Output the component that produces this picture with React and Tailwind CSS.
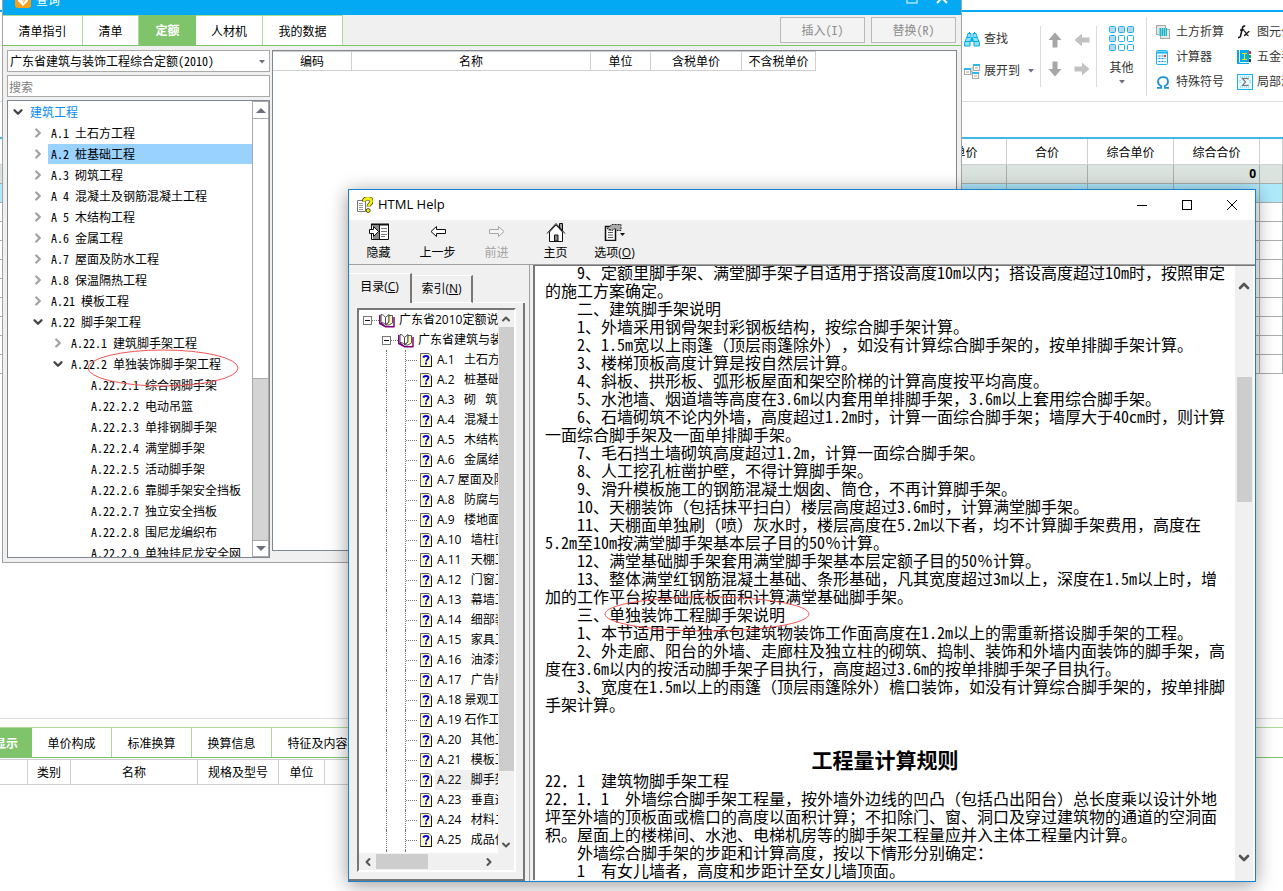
import React from 'react'
import { ChevronDown, ChevronRight, ChevronUp, ChevronLeft } from 'lucide-react'

const SONG = "font-['Noto_Sans_Mono_CJK_SC','Liberation_Mono','Noto_Sans_CJK_SC',monospace]"
const YAHEI = "font-['Open_Sans','Noto_Sans_CJK_SC',sans-serif]"

const quotaTree = [
  { level: 0, label: '建筑工程', state: 'open' },
  { level: 1, label: 'A.1 土石方工程', state: 'closed' },
  { level: 1, label: 'A.2 桩基础工程', state: 'closed', selected: true },
  { level: 1, label: 'A.3 砌筑工程', state: 'closed' },
  { level: 1, label: 'A 4 混凝土及钢筋混凝土工程', state: 'closed' },
  { level: 1, label: 'A 5 木结构工程', state: 'closed' },
  { level: 1, label: 'A.6 金属工程', state: 'closed' },
  { level: 1, label: 'A.7 屋面及防水工程', state: 'closed' },
  { level: 1, label: 'A.8 保温隔热工程', state: 'closed' },
  { level: 1, label: 'A.21 模板工程', state: 'closed' },
  { level: 1, label: 'A.22 脚手架工程', state: 'open' },
  { level: 2, label: 'A.22.1 建筑脚手架工程', state: 'closed' },
  { level: 2, label: 'A.22.2 单独装饰脚手架工程', state: 'open' },
  { level: 3, label: 'A.22.2.1 综合钢脚手架' },
  { level: 3, label: 'A.22.2.2 电动吊篮' },
  { level: 3, label: 'A.22.2.3 单排钢脚手架' },
  { level: 3, label: 'A.22.2.4 满堂脚手架' },
  { level: 3, label: 'A.22.2.5 活动脚手架' },
  { level: 3, label: 'A.22.2.6 靠脚手架安全挡板' },
  { level: 3, label: 'A.22.2.7 独立安全挡板' },
  { level: 3, label: 'A.22.2.8 围尼龙编织布' },
  { level: 3, label: 'A.22.2.9 单独挂尼龙安全网' },
]

const helpTopics = [
  'A.1   土石方工程',
  'A.2   桩基础工程',
  'A.3   砌   筑工程',
  'A.4   混凝土工程',
  'A.5   木结构工程',
  'A.6   金属结构工程',
  'A.7 屋面及防水工程',
  'A.8   防腐与保温',
  'A.9   楼地面工程',
  'A.10   墙柱面工程',
  'A.11   天棚工程',
  'A.12   门窗工程',
  'A.13   幕墙工程',
  'A.14   细部装饰',
  'A.15   家具工程',
  'A.16   油漆涂料',
  'A.17   广告牌',
  'A.18 景观工程',
  'A.19 石作工程',
  'A.20   其他工程',
  'A.21   模板工程',
  'A.22   脚手架工程',
  'A.23   垂直运输',
  'A.24   材料二次运输',
  'A.25   成品保护',
  'A.26',
]

const articleLines = [
  '　　9、定额里脚手架、满堂脚手架子目适用于搭设高度10m以内；搭设高度超过10m时，按照审定',
  '的施工方案确定。',
  '　　二、建筑脚手架说明',
  '　　1、外墙采用钢骨架封彩钢板结构，按综合脚手架计算。',
  '　　2、1.5m宽以上雨篷（顶层雨篷除外），如没有计算综合脚手架的，按单排脚手架计算。',
  '　　3、楼梯顶板高度计算是按自然层计算。',
  '　　4、斜板、拱形板、弧形板屋面和架空阶梯的计算高度按平均高度。',
  '　　5、水池墙、烟道墙等高度在3.6m以内套用单排脚手架，3.6m以上套用综合脚手架。',
  '　　6、石墙砌筑不论内外墙，高度超过1.2m时，计算一面综合脚手架；墙厚大于40cm时，则计算',
  '一面综合脚手架及一面单排脚手架。',
  '　　7、毛石挡土墙砌筑高度超过1.2m，计算一面综合脚手架。',
  '　　8、人工挖孔桩凿护壁，不得计算脚手架。',
  '　　9、滑升模板施工的钢筋混凝土烟囱、筒仓，不再计算脚手架。',
  '　　10、天棚装饰（包括抹平扫白）楼层高度超过3.6m时，计算满堂脚手架。',
  '　　11、天棚面单独刷（喷）灰水时，楼层高度在5.2m以下者，均不计算脚手架费用，高度在',
  '5.2m至10m按满堂脚手架基本层子目的50％计算。',
  '　　12、满堂基础脚手架套用满堂脚手架基本层定额子目的50％计算。',
  '　　13、整体满堂红钢筋混凝土基础、条形基础，凡其宽度超过3m以上，深度在1.5m以上时，增',
  '加的工作平台按基础底板面积计算满堂基础脚手架。',
  '　　三、单独装饰工程脚手架说明',
  '　　1、本节适用于单独承包建筑物装饰工作面高度在1.2m以上的需重新搭设脚手架的工程。',
  '　　2、外走廊、阳台的外墙、走廊柱及独立柱的砌筑、捣制、装饰和外墙内面装饰的脚手架，高',
  '度在3.6m以内的按活动脚手架子目执行，高度超过3.6m的按单排脚手架子目执行。',
  '　　3、宽度在1.5m以上的雨篷（顶层雨篷除外）檐口装饰，如没有计算综合脚手架的，按单排脚',
  '手架计算。',
]

const ruleLines = [
  '22．1　建筑物脚手架工程',
  '22．1．1　外墙综合脚手架工程量，按外墙外边线的凹凸（包括凸出阳台）总长度乘以设计外地',
  '坪至外墙的顶板面或檐口的高度以面积计算；不扣除门、窗、洞口及穿过建筑物的通道的空洞面',
  '积。屋面上的楼梯间、水池、电梯机房等的脚手架工程量应并入主体工程量内计算。',
  '　　外墙综合脚手架的步距和计算高度，按以下情形分别确定：',
  '　　1　有女儿墙者，高度和步距计至女儿墙顶面。',
]

/* ---------- icons ---------- */

function Caret({ className = '' }) {
  return (
    <svg width="6" height="4" viewBox="0 0 6 4" className={className}>
      <path d="M0 0h6L3 3.5z" fill="#6b6f80" />
    </svg>
  )
}

function BinocularsIcon() {
  return (
    <svg width="16" height="15" viewBox="0 0 16 15">
      <path d="M4 1.500h3v3l.5 1v4H6V14H.6v-3.500L3 5z" fill="#8fe3fb" stroke="#00a9ea" />
      <path d="M12 1.500H9v3l-.5 1v4H10V14h5.400v-3.500L13 5z" fill="#8fe3fb" stroke="#00a9ea" />
      <path d="M5 .5h1M10 .5h1M3 5.500h3.500M9.500 5.500H13M6 8h4M1 9.500h5M10 9.500h5" stroke="#00a9ea" />
    </svg>
  )
}

function ExpandIcon() {
  return (
    <svg width="16" height="15" viewBox="0 0 16 15" fill="#fff" stroke="#a9a9a9">
      <path d="M6.500 7.500H8M8 3.500v8M8 3.500h2M8 11.500h1" fill="none" />
      <rect x=".5" y="4.500" width="6" height="6" />
      <rect x="9.500" y=".5" width="6" height="6" />
      <rect x="8.500" y="8.500" width="6" height="6" />
      <path d="M0 5h7M9 1h7M8 9h7" stroke="#2bb7f0" strokeWidth="2" />
      <path d="M2 8h3M11 4h3M10 12h3" stroke="#e2cdb8" strokeWidth="2" />
    </svg>
  )
}

function BlockArrow({ className = '', color = '#a6a6a6' }) {
  return (
    <svg width="16" height="16" viewBox="0 0 16 16" className={className}>
      <path d="M8 .5 14.500 8H10.500V15.500H5.500V8H1.500z" fill={color} />
    </svg>
  )
}

function GridIcon() {
  const cells = [0, 9, 18]
  return (
    <svg width="26" height="26" viewBox="0 0 26 26">
      {cells.map((y, r) =>
        cells.map((x, c) => (
          <rect
            key={`${x}-${y}`}
            x={x + 0.5}
            y={y + 0.5}
            width="6"
            height="6"
            rx="1"
            fill={r === 0 || c === 0 ? '#b5d8f1' : '#fff'}
            stroke="#1cb2f0"
          />
        )),
      )}
    </svg>
  )
}

function EarthworkIcon() {
  return (
    <svg width="15" height="15" viewBox="0 0 15 15">
      <rect x=".5" y=".5" width="9" height="9" fill="#e6e6e6" stroke="#a8a8a8" />
      <rect x="4.500" y="4.500" width="9" height="9" fill="#e6e6e6" stroke="#a8a8a8" />
      <rect x="3" y="3" width="8" height="8" fill="#1db4c4" />
      <path d="M3 4h8M3 6h8M3 8h8M3 10h8" stroke="#c9f2f7" strokeDasharray="1 1" />
    </svg>
  )
}

function CalculatorIcon() {
  return (
    <svg width="13" height="15" viewBox="0 0 13 15">
      <rect x=".5" y=".5" width="11" height="14" rx="1" fill="#eaf8fe" stroke="#1cb2f0" />
      <path d="M1 2.500h10" stroke="#1cb2f0" strokeWidth="2" />
      <path d="M2.500 6h5M2.500 8.500h7M2.500 11.500h7" stroke="#1a8fd0" strokeDasharray="2 1" />
      <path d="M8 6h2" stroke="#f0442c" strokeWidth="2" />
    </svg>
  )
}

function OmegaIcon() {
  return (
    <svg width="14" height="13" viewBox="0 0 14 13">
      <path
        d="M1 11.800h4.200V10C3 9 2 7.500 2 5.500 2 2.800 4 1.200 7 1.200s5 1.600 5 4.300c0 2-1 3.500-3.200 4.500v1.800H13"
        fill="none"
        stroke="#1e90d8"
        strokeWidth="1.800"
      />
    </svg>
  )
}

function FunctionIcon() {
  return (
    <svg width="14" height="14" viewBox="0 0 14 14" fill="none" stroke="#111">
      <path d="M1 12.500c2 .5 2.500-1 3-3.500L5.500 3C6 1 7 .8 8.200 1.300M3 5h4.500" strokeWidth="1.500" />
      <path d="M7 6.500c2-.8 2 4.500 4.500 4M12.500 6.300c-2 0-3 4.200-5.500 4.200" strokeWidth="1.300" />
    </svg>
  )
}

function HardwareIcon() {
  return (
    <svg width="14" height="14" viewBox="0 0 14 14">
      <rect x="0" y="0" width="12" height="14" fill="#00a9ea" />
      <path d="M2.500 0v12M2.500 12.500H12" stroke="#fff" />
      <path d="M5 3.500h5M7.500 3.500v6M5 9.500h5" stroke="#ffe100" />
      <path d="M13 1v3" stroke="#f22" strokeWidth="2" />
      <path d="M13 5v3" stroke="#2a2" strokeWidth="2" />
      <path d="M13 9v3" stroke="#333" strokeWidth="2" />
    </svg>
  )
}

function SigmaIcon() {
  return (
    <svg width="16" height="16" viewBox="0 0 16 16">
      <rect x=".5" y=".5" width="15" height="15" fill="#e6f8fe" stroke="#1cb2f0" />
      <path d="M3 3h10M3 13h10M3 6v4M13 6v4" stroke="#53c9f2" strokeDasharray="1 1" />
      <path d="M11 5.500V4.500H5.500L8.500 8l-3 3.500H11v-1" fill="none" stroke="#777" strokeWidth="1.200" />
    </svg>
  )
}

function HelpAppIcon() {
  return (
    <svg width="16" height="16" viewBox="0 0 16 16">
      <path d="M.5 3.500h8v11h-8z" fill="#fff" stroke="#777" />
      <path d="M2 6.500h4M2 8.500h4M2 10.500h4M2 12.500h4" stroke="#999" />
      <path d="M7 4.500C7 2 8.500 1.500 10.800 1.500s3.700 1 3.700 3c0 2.500-3 2.500-3 5" fill="none" stroke="#222" strokeWidth="4" />
      <path d="M7 4.500C7 2 8.500 1.500 10.800 1.500s3.700 1 3.700 3c0 2.500-3 2.500-3 5" fill="none" stroke="#f4ee00" strokeWidth="2.800" />
      <circle cx="11.200" cy="13.500" r="2" fill="#f4ee00" stroke="#222" strokeWidth=".8" />
    </svg>
  )
}

function HideIcon() {
  return (
    <svg width="20" height="18" viewBox="0 0 20 18">
      <path d="M2.500 1.500h17v15h-17z" fill="#fff" stroke="#111" />
      <path d="M2 1.500h18" stroke="#111" strokeWidth="2" />
      <rect x="4" y="3" width="6" height="13" fill="#8a8a8a" />
      <path d="M10.500 2v15" stroke="#111" />
      <path d="M12 5.500h6M12 8.500h6M12 11.500h6M12 13.500h4" stroke="#777" />
      <path d="M.5 6.500h4v-3L9.500 8.500l-5 5v-3h-4z" fill="#fff" stroke="#111" />
    </svg>
  )
}

function BackIcon() {
  return (
    <svg width="16" height="16" viewBox="0 0 16 16">
      <path d="M6.500 2.500v3h9v4h-9v3L1 7.500z" fill="#fff" stroke="#111" />
    </svg>
  )
}

function ForwardIcon() {
  return (
    <svg width="16" height="16" viewBox="0 0 16 16">
      <path d="M9.500 2.500v3h-9v4h9v3L15 7.500z" fill="#f4f4f4" stroke="#a6a6a6" />
    </svg>
  )
}

function HomeIcon() {
  return (
    <svg width="20" height="20" viewBox="0 0 20 20">
      <path d="M13.500 1.500h3v7h-3z" fill="#999" stroke="#111" />
      <path d="M3.500 10v9.500h13V10L10 3z" fill="#fff" stroke="#111" />
      <path d="M1 11.500 10 1.500l9 10" fill="none" stroke="#111" />
      <path d="M8.500 19v-6h3.500v6z" fill="#888" stroke="#111" />
    </svg>
  )
}

function OptionsIcon() {
  return (
    <svg width="21" height="18" viewBox="0 0 21 18">
      <path d="M1.500 3.500h10v14h-10z" fill="#fff" stroke="#111" strokeWidth="1.500" />
      <path d="M4 7h5M4 9.500h5M4 12h5M4 14.500h5" stroke="#555" />
      <path d="M3 5.500 8 1.500h9v6h-4l-2-2-3 2z" fill="#aaa" stroke="#222" strokeDasharray="2 1" />
      <path d="M16 10h5l-2.500 3z" fill="#111" />
    </svg>
  )
}

function BookIcon() {
  return (
    <svg width="16" height="15" viewBox="0 0 16 15" className="shrink-0">
      <path d="M0 2h1.500v8H3l4 3h8.500v1.500H6.500L0 11z" fill="#800080" />
      <path d="M2 1.500C4 1.500 5 2.500 6.500 4.500v7C5 10 4 9.500 2 9.500z" fill="#fff" stroke="#444" />
      <path d="M6.500 4.500 10 1.500V9L6.500 11.500z" fill="#fff" stroke="#444" />
      <path d="M10 2.500h3.500V10L10 12H7l3-3z" fill="#fffbb0" stroke="#555" />
      <path d="M15 4v9.500" stroke="#800080" strokeWidth="1.500" />
    </svg>
  )
}

function TopicIcon() {
  return (
    <svg width="12" height="14" viewBox="0 0 12 14" className="shrink-0">
      <path d="M.5.500h8.500l2.500 2.500v10.500h-11z" fill="#fffcc8" stroke="#666" />
      <path d="M11.500 3v10.500H.5" fill="none" stroke="#111" />
      <path d="M3.500 4.800C3.500 3.300 4.500 3 6 3s2.500.6 2.500 1.800C8.500 6.300 6.200 6.500 6.200 8.500" fill="none" stroke="#0000e0" strokeWidth="1.800" />
      <rect x="5" y="9.500" width="2" height="2" fill="#0000e0" />
    </svg>
  )
}

function MinusBox() {
  return (
    <svg width="9" height="9" viewBox="0 0 9 9" className="shrink-0">
      <rect x=".5" y=".5" width="8" height="8" fill="#fff" stroke="#777" />
      <path d="M2 4.500h5" stroke="#111" />
    </svg>
  )
}

/* ---------- main application ---------- */

function RibbonItem({ icon, label, caret }) {
  return (
    <button type="button" className="flex h-6 items-center whitespace-nowrap">
      <span className="flex w-5 items-center">{icon}</span>
      {label}
      {caret && <Caret className="ml-2" />}
    </button>
  )
}

function Ribbon() {
  return (
    <div className={`flex h-[90px] border-b border-[#dcdcdc] pl-[964px] text-[12px] text-[#333] ${YAHEI}`}>
      <div className="flex w-[76px] shrink-0 flex-col gap-2 pt-[15px]">
        <RibbonItem icon={<BinocularsIcon />} label="查找" />
        <RibbonItem icon={<ExpandIcon />} label="展开到" caret />
      </div>
      <div className="mt-[14px] grid h-[61px] w-[57px] shrink-0 grid-cols-2 place-items-center gap-x-2 border-x border-[#dcdcdc] px-[5px] pb-1">
        <button type="button" aria-label="上移"><BlockArrow /></button>
        <button type="button" aria-label="升级"><BlockArrow className="-rotate-90" color="#c2c2c2" /></button>
        <button type="button" aria-label="下移"><BlockArrow className="rotate-180" /></button>
        <button type="button" aria-label="降级"><BlockArrow className="rotate-90" color="#c2c2c2" /></button>
      </div>
      <button type="button" className="flex w-[49px] shrink-0 flex-col items-center pt-[14px]">
        <GridIcon />
        <span className="mt-[6px] leading-5">其他</span>
        <Caret className="mt-[2px]" />
      </button>
      <div className="mt-[5px] flex h-[79px] shrink-0 flex-col gap-px border-l border-[#dcdcdc] pt-[3px] pl-[9px]">
        <RibbonItem icon={<EarthworkIcon />} label="土方折算" />
        <RibbonItem icon={<CalculatorIcon />} label="计算器" />
        <RibbonItem icon={<OmegaIcon />} label="特殊符号" />
      </div>
      <div className="mt-[5px] flex shrink-0 flex-col gap-px pt-[3px] pl-[13px]">
        <RibbonItem icon={<FunctionIcon />} label="图元公式" />
        <RibbonItem icon={<HardwareIcon />} label="五金手册" />
        <RibbonItem icon={<SigmaIcon />} label="局部汇总" />
      </div>
    </div>
  )
}

function BudgetTable() {
  const cell = 'h-[19px] border-r border-b border-[#a9adab] p-0'
  const head = 'h-[26px] border-r border-b border-[#cfcfcf] p-0 font-normal'
  return (
    <table className={`w-full table-fixed border-separate border-spacing-0 text-[12px] ${SONG}`}>
      <colgroup>
        <col />
        <col className="w-[82px]" />
        <col className="w-[81px]" />
        <col className="w-[86px]" />
        <col className="w-[86px]" />
        <col className="w-[23px]" />
      </colgroup>
      <thead>
        <tr>
          {['', '单价', '合价', '综合单价', '综合合价', ''].map((name, idx) => (
            <th key={idx} className={head}>{name}</th>
          ))}
        </tr>
      </thead>
      <tbody>
        <tr className="bg-[#dae3de]">
          <td className={cell} />
          <td className={cell} />
          <td className={cell} />
          <td className={cell} />
          <td className={`${cell} pr-[3px] text-right font-['Open_Sans',sans-serif] leading-[18px] font-bold`}>0</td>
          <td className={cell} />
        </tr>
        {Array.from({ length: 10 }, (_, row) => (
          <tr key={row} className={row === 0 ? 'bg-[#ade8fb]' : ''}>
            {Array.from({ length: 6 }, (_, col) => (
              <td key={col} className={cell} />
            ))}
          </tr>
        ))}
      </tbody>
    </table>
  )
}

function DetailPanel() {
  const tab = 'w-20 shrink-0 border-r border-[#a9dd97] pt-px'
  return (
    <div className={`mt-auto h-[173px] border-t border-[#dcdcdc] pt-2 text-[12px] ${SONG}`}>
      <div className="flex h-[31px] border-t border-b border-t-[#a9dd97] border-b-[#7fc46b] whitespace-nowrap">
        <button type="button" className="flex w-8 shrink-0 items-center justify-end bg-[#7fc46b] pr-[14px] font-bold text-white">显示</button>
        <button type="button" className={tab}>单价构成</button>
        <button type="button" className={tab}>标准换算</button>
        <button type="button" className={tab}>换算信息</button>
        <button type="button" className="w-[92px] shrink-0 border-r border-[#a9dd97] pt-px">特征及内容</button>
      </div>
      <table className="mt-px w-[700px] table-fixed border-separate border-spacing-0 border-t border-[#cfcfcf]">
        <colgroup>
          <col className="w-[28px]" />
          <col className="w-[43px]" />
          <col className="w-[127px]" />
          <col className="w-[81px]" />
          <col className="w-[46px]" />
          <col />
        </colgroup>
        <thead>
          <tr>
            {['', '类别', '名称', '规格及型号', '单位', ''].map((name, idx) => (
              <th key={idx} className="h-[25px] border-r border-b border-[#cfcfcf] p-0 font-normal">{name}</th>
            ))}
          </tr>
        </thead>
      </table>
    </div>
  )
}

/* ---------- query window ---------- */

function QuotaTreeRow({ item }) {
  const chevronPad = ['pl-[3px]', 'pl-[23px]', 'pl-[43px]', 'pl-[63px]'][item.level]
  return (
    <li className={`flex h-[21px] ${chevronPad}`}>
      <button type="button" aria-label="展开" className="flex w-[14px] shrink-0 items-center justify-center">
        {item.state === 'open' && <ChevronDown size={14} strokeWidth={4} color="#444" />}
        {item.state === 'closed' && <ChevronRight size={14} strokeWidth={4} color="#a3a3a3" />}
      </button>
      <span
        className={`flex grow items-center whitespace-pre ${item.level === 0 ? 'pl-[5px] text-[#0a8cf5]' : 'ml-[3px] pl-[3px]'} ${
          item.selected ? 'mt-px bg-[#99d1ff]' : ''
        }`}
      >
        {item.label}
      </span>
    </li>
  )
}

function QueryWindow() {
  const tab = 'shrink-0 border-t border-r border-[#a9dd97] bg-white pt-px'
  const action = 'h-[26px] w-[85px] border border-[#b9b9b9] bg-[#f3f3f3] text-[#8c8c8c]'
  const field = 'h-[22px] w-full border border-[#a9a9a9] bg-white'
  return (
    <section className={`absolute -top-[15px] left-[2px] w-[960px] border-x border-b border-[#a3a3a3] bg-[#f0f0f0] text-[12px] ${SONG}`}>
      <header className="flex h-[30px] items-center bg-[#03a9f2] pr-[13px] pl-3 text-white">
        <svg width="16" height="16" viewBox="0 0 16 16">
          <rect width="16" height="16" rx="3" fill="#f9a11b" />
          <path d="M3 4l5 5 5-5v5l-5 5-5-5z" fill="#fff" />
          <path d="M8 11l3-4" stroke="#f9a11b" />
        </svg>
        <h1 className="grow pl-[5px] text-[12px]">查询</h1>
        <button type="button" aria-label="最大化" className="mr-[18px] mb-1">
          <svg width="12" height="12" viewBox="0 0 12 12"><rect x="1" y="1" width="10" height="10" fill="none" stroke="#fff" /></svg>
        </button>
        <button type="button" aria-label="关闭" className="mb-1">
          <svg width="12" height="12" viewBox="0 0 12 12"><path d="M1 1l10 10M11 1 1 11" stroke="#fff" strokeWidth="2" /></svg>
        </button>
      </header>
      <nav className="flex h-[31px] items-stretch border-b border-[#7fc46b]">
        <button type="button" className={`${tab} w-20`}>清单指引</button>
        <button type="button" className={`${tab} w-14`}>清单</button>
        <button type="button" className="w-[57px] shrink-0 bg-[#7fc46b] font-bold text-white">定额</button>
        <button type="button" className={`${tab} w-[67px]`}>人材机</button>
        <button type="button" className={`${tab} w-20`}>我的数据</button>
        <div className="flex grow items-center justify-end gap-[6px] pr-[5px]">
          <button type="button" disabled className={action}>插入(I)</button>
          <button type="button" disabled className={action}>替换(R)</button>
        </div>
      </nav>
      <div className="flex gap-[2px] px-1 pt-1 pb-1">
        <div className="flex w-[263px] shrink-0 flex-col gap-[3px]">
          <div className="relative">
            <select aria-label="定额库" className={`${field} appearance-none pl-[2px]`}>
              <option>广东省建筑与装饰工程综合定额(2010)</option>
            </select>
            <Caret className="pointer-events-none absolute top-[10px] right-[5px]" />
          </div>
          <input aria-label="搜索" placeholder="搜索" className={`${field} pl-px placeholder:text-[#808080]`} />
          <div className="flex h-[458px] overflow-hidden border border-[#7f8790] bg-white">
            <ul className="grow overflow-hidden">
              {quotaTree.map((item) => (
                <QuotaTreeRow key={item.label} item={item} />
              ))}
            </ul>
            <div className="flex w-[17px] shrink-0 flex-col border border-[#a9a9a9] bg-[#d4d4d4]">
              <button type="button" aria-label="向上滚动" className="flex h-4 items-center justify-center bg-white">
                <svg width="10" height="5" viewBox="0 0 10 5"><path d="M0 5h10L5 0z" fill="#6b6f80" /></svg>
              </button>
              <div className="h-[261px] border-y border-[#a9a9a9] bg-white" />
              <button type="button" aria-label="向下滚动" className="mt-auto flex h-4 items-center justify-center border-t border-[#a9a9a9] bg-white">
                <svg width="10" height="5" viewBox="0 0 10 5"><path d="M0 0h10L5 5z" fill="#6b6f80" /></svg>
              </button>
            </div>
          </div>
        </div>
        <div className="mb-[7px] grow border border-[#7f8790] bg-white">
          <table className="table-fixed border-separate border-spacing-0">
            <thead>
              <tr>
                {[
                  ['编码', 'w-[79px]'],
                  ['名称', 'w-[239px]'],
                  ['单位', 'w-[60px]'],
                  ['含税单价', 'w-[91px]'],
                  ['不含税单价', 'w-[74px]'],
                ].map(([name, width]) => (
                  <th key={name} className={`h-[20px] border-t border-r border-b border-[#cfcfcf] p-0 font-normal whitespace-nowrap leading-4 ${width}`}>
                    {name}
                  </th>
                ))}
              </tr>
            </thead>
          </table>
        </div>
      </div>
    </section>
  )
}

/* ---------- help window ---------- */

function HelpTool({ icon, label, disabled }) {
  return (
    <button type="button" disabled={disabled} className={`flex h-full w-[59px] flex-col items-center ${disabled ? 'text-[#a3a3a3]' : ''}`}>
      <span className="flex h-6 items-center">{icon}</span>
      <span className="leading-[17px]">{label}</span>
    </button>
  )
}

function HelpContents() {
  return (
    <div className="flex min-h-0 grow flex-col overflow-hidden border-2 border-[#fff] border-t-[#777] border-l-[#777] bg-[#f0f0f0]">
      <div className="flex min-h-0 grow">
        <ul className="w-[139px] shrink-0 overflow-hidden bg-white whitespace-pre">
          <li className="flex h-5 items-center pl-1">
            <MinusBox />
            <span className="w-[7px] shrink-0 border-t border-dotted border-[#777]" />
            <BookIcon />
            <span className="pl-[4px]">广东省2010定额说明</span>
          </li>
          <li className="flex h-5 items-center pl-[23px]">
            <MinusBox />
            <span className="w-[7px] shrink-0 border-t border-dotted border-[#777]" />
            <BookIcon />
            <span className="pl-[4px]">广东省建筑与装饰工程</span>
          </li>
          {helpTopics.map((topic) => (
            <li key={topic} className="flex h-5 items-center pl-[27px]">
              <span className="h-5 w-[19px] shrink-0 border-l border-dotted border-[#777]" />
              <span className="flex h-5 w-[15px] shrink-0 items-center border-l border-dotted border-[#777]">
                <span className="w-[11px] border-t border-dotted border-[#777]" />
              </span>
              <TopicIcon />
              <span className={`ml-[3px] h-5 grow pl-[2px] leading-5 ${topic.startsWith('A.22') ? 'bg-[#f0f0f0]' : ''}`}>{topic}</span>
            </li>
          ))}
        </ul>
        <div className="flex grow flex-col items-center bg-[#f0f0f0]">
          <button type="button" aria-label="向上滚动" className="flex h-[17px] items-center"><ChevronUp size={12} strokeWidth={4} color="#555" /></button>
          <div className="h-[444px] w-[15px] bg-[#cdcdcd]" />
          <button type="button" aria-label="向下滚动" className="mt-auto mb-[2px]"><ChevronDown size={12} strokeWidth={4} color="#555" /></button>
        </div>
      </div>
      <div className="flex h-[17px] shrink-0 items-center pr-[15px]">
        <button type="button" aria-label="向左滚动" className="flex w-[17px] justify-center"><ChevronLeft size={12} strokeWidth={4} color="#555" /></button>
        <div className="h-[15px] w-[52px] bg-[#cdcdcd]" />
        <button type="button" aria-label="向右滚动" className="ml-auto flex w-[20px] justify-center"><ChevronRight size={12} strokeWidth={4} color="#555" /></button>
      </div>
    </div>
  )
}

function HelpWindow() {
  return (
    <section className={`absolute top-[189px] left-[348px] flex h-[693px] w-[908px] flex-col border border-[#1a80d0] bg-[#f0f0f0] text-[12px] text-black shadow-[0_3px_18px_rgba(0,0,0,0.4)] ${YAHEI}`}>
      <header className="flex h-[30px] shrink-0 items-center bg-white pr-[17px] pl-2">
        <HelpAppIcon />
        <h2 className="grow pl-[5px] text-[13px]">HTML Help</h2>
        <div className="flex gap-[33px]">
          <button type="button" aria-label="最小化">
            <svg width="12" height="12" viewBox="0 0 12 12"><path d="M1 6.500h10" stroke="#000" /></svg>
          </button>
          <button type="button" aria-label="最大化">
            <svg width="12" height="12" viewBox="0 0 12 12"><rect x="1.500" y="1.500" width="9" height="9" fill="none" stroke="#000" /></svg>
          </button>
          <button type="button" aria-label="关闭">
            <svg width="12" height="12" viewBox="0 0 12 12"><path d="M1 1l10 10M11 1 1 11" stroke="#000" /></svg>
          </button>
        </div>
      </header>
      <div className="flex h-[45px] shrink-0 border-b border-[#a0a0a0] pb-px">
        <HelpTool icon={<HideIcon />} label="隐藏" />
        <HelpTool icon={<BackIcon />} label="上一步" />
        <HelpTool icon={<ForwardIcon />} label="前进" disabled />
        <HelpTool icon={<HomeIcon />} label="主页" />
        <HelpTool icon={<OptionsIcon />} label={<>选项(<u>O</u>)</>} />
      </div>
      <div className="flex min-h-0 grow">
        <div className="flex w-[181px] shrink-0 flex-col border-r border-[#a0a0a0] pt-2 pr-1">
          <div className="flex h-[30px] shrink-0 items-end">
            <button type="button" className="h-[30px] w-[63px] border-t border-r-2 border-t-white border-r-[#777] pb-1">
              目录(<u>C</u>)
            </button>
            <button type="button" className="h-[28px] w-[61px] border-t border-r-2 border-b border-t-white border-r-[#777] border-b-white">
              索引(<u>N</u>)
            </button>
            <div className="grow border-b border-white" />
          </div>
          <div className="flex min-h-0 grow flex-col border-r-2 border-b-2 border-[#777] pt-[5px] pr-[7px] pb-[7px] pl-2">
            <HelpContents />
          </div>
        </div>
        <div className="mb-px ml-[3px] flex grow border-t border-l-2 border-[#777] bg-white">
          <article className={`grow overflow-hidden pl-[10px] text-[16px] leading-[18px] whitespace-pre [text-spacing-trim:space-all] ${SONG}`}>
            <div className="-mt-[3px]">
              {articleLines.map((line, idx) => (
                <p key={idx}>{line}</p>
              ))}
              <h3 className="mt-[34px] pr-[10px] text-center text-[21px] leading-[24px] font-bold">工程量计算规则</h3>
              {ruleLines.map((line, idx) => (
                <p key={idx}>{line}</p>
              ))}
            </div>
          </article>
          <div className="mr-[2px] flex w-[18px] shrink-0 flex-col items-center bg-[#f0f0f0] pt-3 pb-[14px]">
            <button type="button" aria-label="向上滚动"><ChevronUp size={16} strokeWidth={4} color="#555" /></button>
            <div className="mt-[83px] h-[125px] w-[15px] bg-[#cdcdcd]" />
            <button type="button" aria-label="向下滚动" className="mt-auto"><ChevronDown size={16} strokeWidth={4} color="#555" /></button>
          </div>
        </div>
      </div>
    </section>
  )
}

export default function App() {
  return (
    <main className="relative flex h-screen w-full flex-col overflow-hidden bg-white text-black">
      <div className="h-[10px] shrink-0" />
      <div className="h-[2px] shrink-0 bg-[#03a9f2]" />
      <Ribbon />
      <div className="box-content h-[35px] shrink-0 border-b-2 border-[#42b8e8]" />
      <BudgetTable />
      <DetailPanel />
      <QueryWindow />
      <HelpWindow />

      {/* hand-drawn marks over both windows */}
      <svg width="152" height="40" viewBox="0 0 152 40" className="pointer-events-none absolute top-[349px] left-[87px]">
        <ellipse cx="76" cy="19" rx="75" ry="18" fill="none" stroke="#f25555" />
      </svg>
      <svg width="206" height="36" viewBox="0 0 206 36" className="pointer-events-none absolute top-[596px] left-[604px]">
        <ellipse cx="103" cy="18" rx="102" ry="17" fill="none" stroke="#f25555" />
      </svg>
    </main>
  )
}
